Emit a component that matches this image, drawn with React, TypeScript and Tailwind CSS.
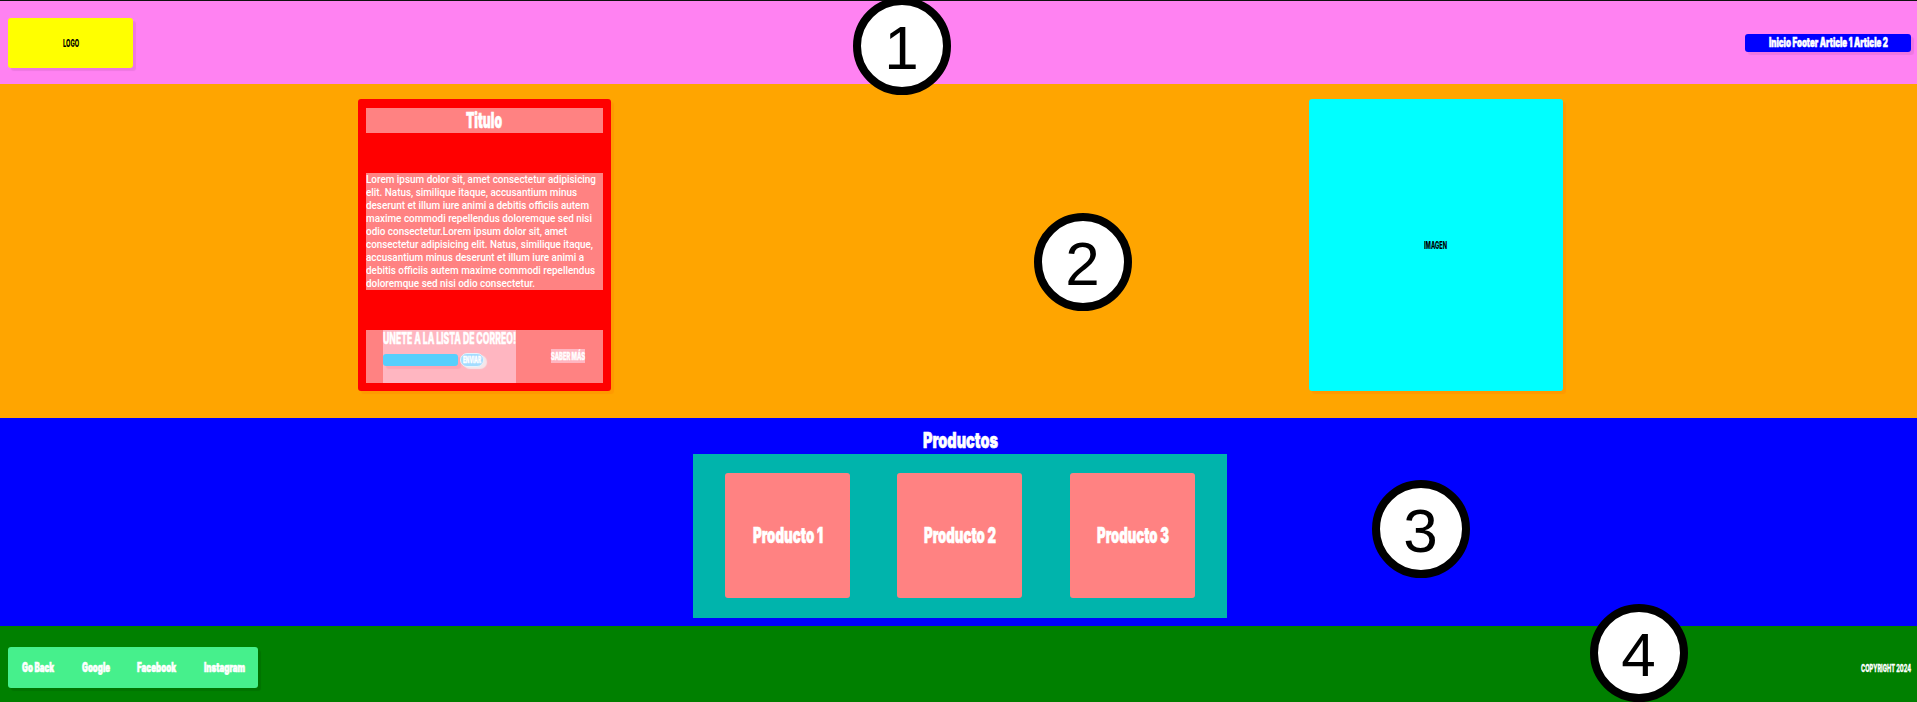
import { useLayoutEffect, useRef, useState } from "react";
import { clsx } from "clsx";

/* Single line of text, condensed horizontally so that it fills the width of its box. */
function FitText({ text, className }: { text: string; className: string }) {
  const box = useRef<HTMLSpanElement>(null);
  const line = useRef<HTMLSpanElement>(null);
  const [scale, setScale] = useState(1);
  useLayoutEffect(() => {
    if (box.current && line.current && line.current.offsetWidth > 0) {
      const natural = line.current.getBoundingClientRect().width / scale;
      setScale(box.current.getBoundingClientRect().width / natural);
    }
  }, [text]);
  return (
    <span ref={box} className={clsx("block shrink-0 whitespace-nowrap", className)}>
      <span ref={line} className="inline-block origin-left align-top" style={{ transform: `scaleX(${scale})` }}>
        {text}
      </span>
    </span>
  );
}

const anton = "font-['Inter','Liberation_Sans',sans-serif] font-black text-white [-webkit-text-stroke:0.6px_white]";
const bebas = "font-['Inter','Liberation_Sans',sans-serif] font-extrabold";

const paragraph = [
  { text: "Lorem ipsum dolor sit, amet consectetur adipisicing", width: "w-[230px]" },
  { text: "elit. Natus, similique itaque, accusantium minus", width: "w-[211px]" },
  { text: "deserunt et illum iure animi a debitis officiis autem", width: "w-[223px]" },
  { text: "maxime commodi repellendus doloremque sed nisi", width: "w-[226px]" },
  { text: "odio consectetur.Lorem ipsum dolor sit, amet", width: "w-[201px]" },
  { text: "consectetur adipisicing elit. Natus, similique itaque,", width: "w-[227px]" },
  { text: "accusantium minus deserunt et illum iure animi a", width: "w-[218px]" },
  { text: "debitis officiis autem maxime commodi repellendus", width: "w-[229px]" },
  { text: "doloremque sed nisi odio consectetur.", width: "w-[169px]" },
];

const products = [
  { name: "Producto 1", width: "w-[70px]", gap: "mr-[47px]" },
  { name: "Producto 2", width: "w-[72px]", gap: "mr-[48px]" },
  { name: "Producto 3", width: "w-[72px]", gap: "mr-0" },
];

const links = [
  { name: "Go Back", width: "w-[32px]" },
  { name: "Google", width: "w-[28px]" },
  { name: "Facebook", width: "w-[39px]" },
  { name: "Instagram", width: "w-[41px]" },
];

const badges = [
  { n: 1, place: "left-[853px] top-[-3px]" },
  { n: 2, place: "left-[1034px] top-[213px]" },
  { n: 3, place: "left-[1372px] top-[480px]" },
  { n: 4, place: "left-[1590px] top-[604px]" },
];

export default function App() {
  return (
    <div className="relative flex h-[702px] w-[1917px] flex-col overflow-hidden">
      <header className="flex h-[84px] items-center justify-between border-t border-[#111] bg-[#ff82f2] pr-1.5 pl-2">
        <div className="flex h-[50px] w-[125px] items-center justify-center rounded-[3px] bg-[#ff0] shadow-[3px_3px_1px_rgba(0,0,0,0.07)]">
          <FitText text="LOGO" className={clsx(bebas, "w-[16px] text-[10px] leading-[14px] text-black")} />
        </div>
        <nav className="flex h-[18px] w-[166px] items-center justify-center rounded-[3px] bg-[#00f] shadow-[3px_3px_1px_rgba(0,0,0,0.07)]">
          <FitText text="Inicio Footer Article 1 Article 2" className={clsx(anton, "w-[119px] text-[12.5px] leading-[18px]")} />
        </nav>
      </header>

      <main className="flex h-[334px] bg-[#ffa500] pt-[15px] pl-[358px]">
        <article className="flex h-[292px] w-[253px] flex-col justify-between rounded-[3px] bg-[#f00] px-2 pt-[9px] pb-2 shadow-[3px_3px_1px_rgba(255,0,0,0.07)]">
          <h1 className="flex h-[25px] items-center justify-center bg-[#ff8282] pr-[2px]">
            <FitText text="Titulo" className={clsx(anton, "w-[36px] text-[22px] leading-[25px]")} />
          </h1>
          <div className="h-[117px] bg-[#ff8282]">
            {paragraph.map((l) => (
              <FitText
                key={l.text}
                text={l.text}
                className={clsx("h-[13px] font-['Roboto','Liberation_Sans',sans-serif] text-[10px] leading-[13px] font-medium text-white", l.width)}
              />
            ))}
          </div>
          <div className="flex h-[53px] bg-[#ff8282] pl-[17px]">
            <form className="flex w-[133px] flex-col bg-[#ffb6c1]">
              <FitText text="UNETE A LA LISTA DE CORREO!" className={clsx(bebas, "h-[23px] w-[133px] text-[15.5px] leading-[18px] text-white [-webkit-text-stroke:0.4px_white]")} />
              <div className="flex items-center gap-[2px]">
                <div className="h-3 w-[75px] rounded-[3px] bg-[#57cffc] shadow-[3px_3px_1px_rgba(255,100,130,0.2)]" />
                <div className="flex h-[14px] w-6 items-center justify-center rounded-full border border-[#e6f3fb] bg-[#a3dcff] shadow-[3px_2px_1px_#f5e6ea]">
                  <FitText text="ENVIAR" className={clsx(bebas, "w-[18px] text-[8.5px] leading-3 text-white [-webkit-text-stroke:0.4px_white]")} />
                </div>
              </div>
            </form>
            <div className="mt-[19px] ml-[35px] h-[14px] bg-[#ffb6c1]">
              <FitText text="SABER MÁS" className={clsx(bebas, "w-[34px] text-[10px] leading-[14px] text-white [-webkit-text-stroke:0.4px_white]")} />
            </div>
          </div>
        </article>
        <div className="ml-[698px] flex h-[292px] w-[254px] items-center justify-center rounded-[3px] bg-[#0ff] pr-[2px] shadow-[3px_3px_1px_rgba(255,0,0,0.07)]">
          <FitText text="IMAGEN" className={clsx(bebas, "w-[23px] text-[10px] leading-[14px] text-black")} />
        </div>
      </main>

      <section className="flex h-[208px] flex-col items-center bg-[#00f] pl-[3px]">
        <h2 className="flex h-9 pt-[10px]">
          <FitText text="Productos" className={clsx(anton, "w-[75px] text-[21px] leading-[25px]")} />
        </h2>
        <div className="flex h-[164px] w-[534px] bg-[#00b4ac] pt-[19px] pl-8">
          {products.map((p) => (
            <div key={p.name} className={clsx("flex h-[125px] w-[125px] items-center justify-center rounded-[3px] bg-[#ff8282]", p.gap)}>
              <FitText text={p.name} className={clsx(anton, "text-[21px] leading-[25px]", p.width)} />
            </div>
          ))}
        </div>
      </section>

      <footer className="flex h-[76px] items-center justify-between bg-[#008000] pr-1.5 pl-2">
        <div className="mt-[7px] flex h-[41px] w-[250px] items-center gap-[27.5px] rounded-[3px] bg-[#46f08c] pl-[14px] shadow-[3px_3px_1px_rgba(0,0,0,0.1)]">
          {links.map((l) => (
            <FitText key={l.name} text={l.name} className={clsx(anton, "text-[12.5px] leading-[18px]", l.width)} />
          ))}
        </div>
        <FitText text="COPYRIGHT 2024" className={clsx(bebas, "mt-[7px] w-[50px] text-[10px] leading-[14px] text-white [-webkit-text-stroke:0.3px_white]")} />
      </footer>

      {badges.map((b) => (
        <div
          key={b.n}
          className={clsx(
            "absolute flex size-[98px] items-center justify-center rounded-full border-8 border-black bg-white pt-[3px] pr-[1px] font-['Liberation_Sans',Arial,sans-serif] text-[62px] leading-[62px] text-black",
            b.place,
          )}
        >
          {b.n}
        </div>
      ))}
    </div>
  );
}
